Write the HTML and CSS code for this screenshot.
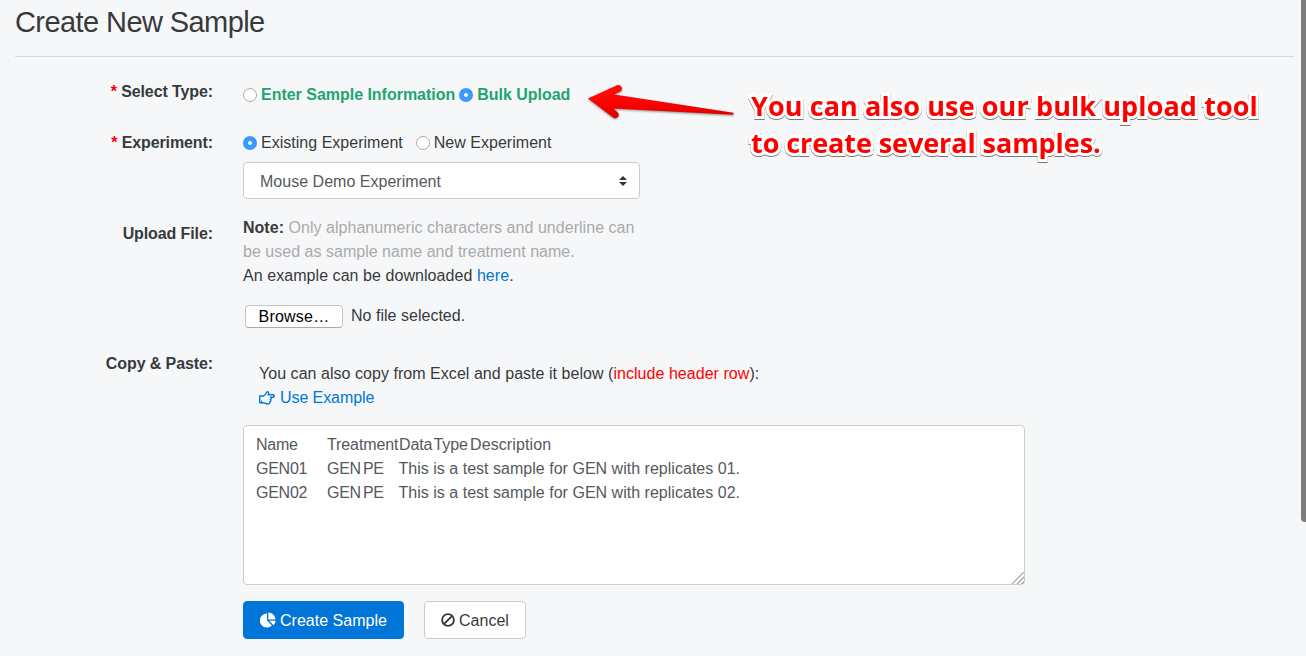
FILE: index.html
```html
<!DOCTYPE html>
<html lang="en">
<head>
<meta charset="utf-8">
<title>Create New Sample</title>
<link rel="stylesheet" href="styles.css">
</head>
<body>
<header class="page-header"><h1 class="page-title">Create New Sample</h1></header>
<form class="form">
  <div class="row row-type">
    <div class="label"><span class="required">*</span> <span class="bold-text">Select Type:</span></div>
    <div class="field radios green">
      <span class="radio"></span><span class="opt-enter">Enter Sample Information</span>
      <span class="radio checked gap-type"></span><span class="opt-bulk">Bulk Upload</span>
    </div>
  </div>
  <div class="row row-experiment">
    <div class="label"><span class="required">*</span> <span class="bold-text">Experiment:</span></div>
    <div class="field">
      <div class="radios">
        <span class="radio checked"></span><span class="opt-existing">Existing Experiment</span>
        <span class="radio gap-exp"></span><span>New Experiment</span>
      </div>
      <div class="select"><span class="select-text">Mouse Demo Experiment</span>
        <svg class="caret" viewBox="0 0 8 10"><path d="M4 0 8 4H0zM0 6h8L4 10z"/></svg>
      </div>
    </div>
  </div>
  <div class="row row-upload">
    <div class="label">Upload File:</div>
    <div class="field">
      <div class="line"><b class="note">Note:</b> <span class="muted note-one">Only alphanumeric characters and underline can</span></div>
      <div class="line muted note-two">be used as sample name and treatment name.</div>
      <div class="line example">An example can be downloaded <a class="link">here</a>.</div>
      <div class="file"><span class="browse">Browse…</span><span class="file-name">No file selected.</span></div>
    </div>
  </div>
  <div class="row row-paste">
    <div class="label">Copy &amp; Paste:</div>
    <div class="field">
      <div class="paste-help">
        <div class="line excel">You can also copy from Excel and paste it below (<span class="red">include header row</span>):</div>
        <div class="line link use-example">
          <svg class="hand" viewBox="0 0 16 14"><path d="M.7 5h3.800C5.800 4.500 6.700 3.200 7.200 2 7.500 1.100 7.800.7 8.400.7c1.400 0 1.500 1.700.8 3.100H13.800c2 0 2 2.500 0 2.500H11.500c1 .5.900 2-.1 2.300.8.700.4 1.900-.5 2.100.3 1.200-.4 2-1.500 2H7.500c-1.300 0-2-.9-3.100-1H.7z"/><path d="M2 10.300h1"/></svg>
          <span>Use Example</span>
        </div>
      </div>
      <div class="textarea">
        <div class="data-row"><span class="name">Name</span><span class="treatment">Treatment</span><span class="type">Data Type</span><span class="head-desc">Description</span></div>
        <div class="data-row"><span class="name">GEN01</span><span class="gen">GEN</span><span class="pe">PE</span><span>This is a test sample for GEN with replicates 01.</span></div>
        <div class="data-row"><span class="name">GEN02</span><span class="gen">GEN</span><span class="pe">PE</span><span>This is a test sample for GEN with replicates 02.</span></div>
        <svg class="grip" viewBox="0 0 12 12"><path d="M0 12 12 0M5 12l7-7M9.500 12l2.500-2.500"/></svg>
      </div>
      <div class="actions">
        <div class="btn primary"><svg class="icon pie" viewBox="0 0 16 16"><path d="M7 1.500V8.500l4.900 4.900A7 7 0 1 1 7 1.500z"/><path d="M8.300.5a7 7 0 0 1 7 7h-7z"/><path d="M9.200 8.700h6.400a7 7 0 0 1-2 4.600z"/></svg><span>Create Sample</span></div>
        <div class="btn"><svg class="icon ban" viewBox="0 0 14 14"><circle cx="7" cy="7" r="5.900"/><path d="M2.900 11.100 11.100 2.900"/></svg><span>Cancel</span></div>
      </div>
    </div>
  </div>
</form>
<svg class="arrow" viewBox="0 0 160 50">
  <defs><linearGradient id="arrow-fill" x1="0" y1="0" x2="0" y2="1"><stop offset="0" stop-color="#ff1209"/><stop offset=".6" stop-color="#fb0000"/><stop offset="1" stop-color="#d90000"/></linearGradient></defs>
  <path fill="url(#arrow-fill)" d="M8 18.500 37 5.200c4-1.600 7 4 3.300 6.300L34 14.600 153.400 32.700v2L33.500 28.500l4.300 4c3 3.300-1.500 7.800-5 4.700z"/>
</svg>
<div class="annotation"><div class="callout-one">You can also use our bulk upload tool</div><div class="callout-two">to create several samples.</div></div>
<div class="scrollbar"></div>
</body>
</html>
```
FILE: styles.css
```css
* { box-sizing: border-box; }
body { margin: 0; height: 656px; overflow: hidden; position: relative; background: #f6f7f9; color: #373a3c; font: 16px/24px "Liberation Sans", Arial, sans-serif; letter-spacing: 0.02px; }
.page-header { height: 57px; margin: 0 12px 0 15px; border-bottom: 1px solid #d9dbdd; }
.page-title { margin: 0; padding-top: 6px; font-size: 29px; line-height: 32px; font-weight: 400; letter-spacing: -0.58px; white-space: nowrap; }
.row { display: grid; grid-template-columns: 213px 782px; column-gap: 30px; white-space: nowrap; }
.label { text-align: right; font-weight: 700; letter-spacing: -0.1px; }
.required, .red { color: #f00; }
.row-type { padding-top: 23px; height: 74px; }
.row-type .field { padding-top: 5px; letter-spacing: -0.02px; }
.radios { display: flex; align-items: center; height: 24px; }
.green { color: #1fa372; font-weight: 700; }
.radio { width: 14px; height: 14px; flex: none; margin-right: 4px; border: 1px solid #a9abad; border-radius: 50%; background: #fff; }
.checked { border: 5px solid #3b99fc; }
.gap-type { margin-left: 4px; }
.gap-exp { margin-left: 13px; }
.row-experiment { height: 73px; }
.select { display: flex; align-items: center; justify-content: space-between; width: 397px; height: 37px; margin-top: 7px; padding: 0 12px 0 16px; border: 1px solid #ccc; border-radius: 4px; background: #fff; color: #55595c; }
.select-text { padding-top: 2px; }
.caret { width: 8px; height: 10px; fill: #333; }
.row-upload { margin-top: 12px; height: 130px; }
.row-upload .label { padding-top: 6px; }
.muted { color: #aaa; }
.note-one { letter-spacing: 0.04px; }
.example { letter-spacing: 0.06px; }
.excel { letter-spacing: 0.04px; }
.link { color: #0275d8; }
.file { display: flex; align-items: center; height: 24px; margin: 16px 0 0 2px; gap: 8px; }
.browse { width: 98px; height: 23px; border: 1px solid #c6c6c6; border-bottom-color: #aaa; border-radius: 4px; background: #fff; color: #000; text-align: center; line-height: 21px; letter-spacing: 0.2px; }
.row-paste { margin-top: 6px; }
.paste-help { padding: 10px 0 0 16px; }
.use-example { display: flex; align-items: center; gap: 5px; letter-spacing: -0.08px; }
.hand { width: 16px; height: 14px; fill: none; stroke: #0275d8; stroke-width: 1.4; stroke-linejoin: round; }
.textarea { position: relative; width: 782px; height: 160px; margin-top: 15px; padding: 7px 12px; border: 1px solid #ccc; border-radius: 4px; background: #fff; color: #55595c; }
.data-row { display: flex; }
.name { width: 71px; letter-spacing: -0.25px; }
.treatment { width: 72px; letter-spacing: -0.1px; }
.type { width: 71px; letter-spacing: -0.1px; word-spacing: -3px; }
.head-desc { letter-spacing: 0.1px; }
.gen { width: 36px; letter-spacing: -0.25px; }
.pe { width: 35.500px; letter-spacing: -0.4px; }
.grip { position: absolute; right: 0; bottom: 0; width: 12px; height: 12px; fill: none; stroke: #999; stroke-width: 1.1; }
.actions { display: flex; gap: 20px; margin-top: 16px; }
.btn { display: flex; align-items: center; height: 38px; padding: 0 16px; border: 1px solid #ccc; border-radius: 4px; background: #fff; gap: 4px; }
.btn span { padding-top: 2px; }
.primary { background: #0275d8; border-color: #0275d8; color: #fff; }
.icon { width: 16px; height: 16px; fill: currentColor; }
.ban { width: 14px; height: 14px; fill: none; stroke: currentColor; stroke-width: 1.9; }
.arrow { position: absolute; left: 580px; top: 80px; width: 160px; height: 50px; filter: drop-shadow(0 1px 1px #888); }
.annotation { position: absolute; left: 751px; top: 87px; color: #f00; font: 700 27px/37px "Open Sans", "Noto Sans", sans-serif; letter-spacing: -0.08px; white-space: nowrap; -webkit-text-stroke: 6px #fff; stroke-linejoin: round; paint-order: stroke fill; filter: drop-shadow(0 1px .5px #777); }
.callout-one { letter-spacing: 0.1px; }
.scrollbar { position: absolute; right: 0; top: 0; width: 5px; height: 522px; background: #7d7d7d; border-bottom-left-radius: 4px; }
```
